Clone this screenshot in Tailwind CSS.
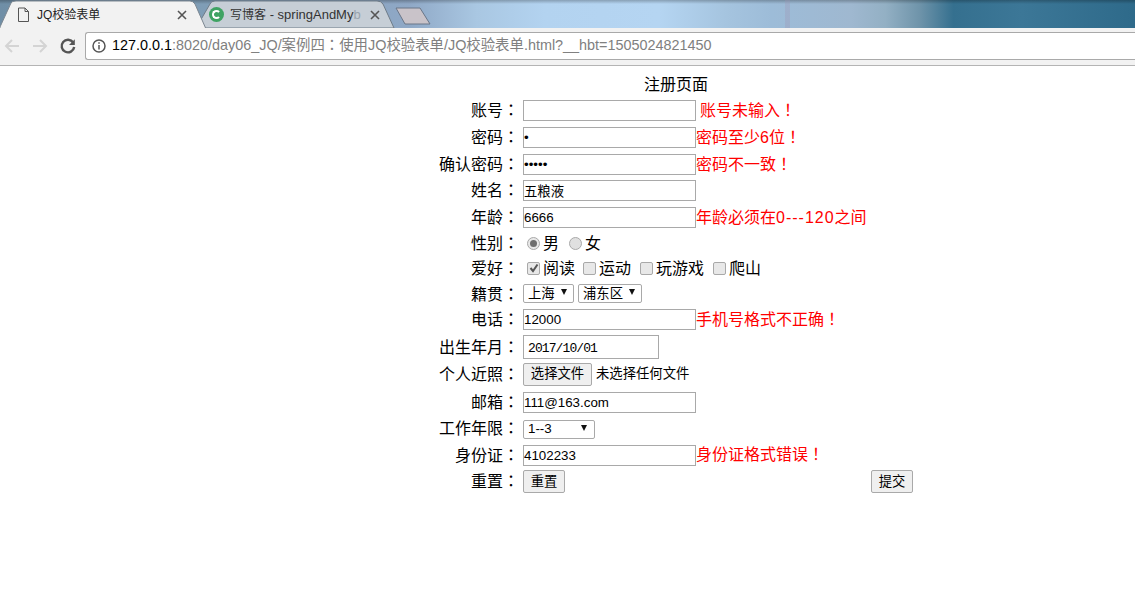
<!DOCTYPE html>
<html lang="zh-CN">
<head>
  <meta charset="UTF-8">
  <script src="https://cdn.jsdelivr.net/npm/@tailwindcss/browser@4"></script>
  <title>JQ校验表单</title>
</head>
<body class="bg-white text-black overflow-hidden font-['Liberation_Sans','Noto_Sans_CJK_SC',sans-serif]">

  <!-- browser chrome -->
  <div class="relative h-[28px] overflow-hidden bg-[linear-gradient(90deg,#6f8ea6_0%,#7f9db6_18%,#8fa8c6_36%,#a9c7e2_42%,#b3d3f0_48%,#b5d5f2_58%,#a5c4df_64%,#9dbcd8_68%,#9fb8d0_75%,#93b0c4_78%,#6f94aa_81%,#35708f_84%,#3c7797_90%,#2e6a8a_100%)]">
    <div class="absolute inset-x-0 top-0 h-[4px] bg-gradient-to-b from-black/25 to-transparent"></div>
    <div class="absolute left-[785px] top-0 w-[5px] h-[28px] bg-[#a096b4]/30"></div>
    <svg class="absolute left-0 top-0" width="440" height="28" viewBox="0 0 440 28">
      <path d="M196 28 L210 4 Q211 1 215 1 L377 1 Q381 1 383 4 L394 28 Z" fill="#c6ced6" stroke="#6f7c88"/>
      <path d="M396 8 L420 8 L430 24 L405 24 Z" fill="#c9c3c9" stroke="#6a7688"/>
      <path d="M0 27 L11 3 Q12 1 16 1 L190 1 Q193 1 195 4 L206 29 L0 29 Z" fill="#f2f2f2" stroke="#7c8791"/>
    </svg>
    <svg class="absolute left-[17px] top-[7px]" width="13" height="16" viewBox="0 0 13 16" fill="none" stroke="#555">
      <path d="M1.5 1 H8 L11.5 4.5 V14.5 H1.5 Z M8 1 V4.5 H11.5"/>
    </svg>
    <span class="absolute left-[37px] top-[6px] text-[12px] leading-[18px] text-[#222]">JQ校验表单</span>
    <svg class="absolute left-[177px] top-[10px]" width="10" height="10" viewBox="0 0 10 10" stroke="#555" stroke-width="1.6">
      <path d="M1 1 L9 9 M9 1 L1 9"/>
    </svg>
    <div class="absolute left-[209px] top-[7px] w-[15px] h-[15px] rounded-full bg-[#3fa363] flex items-center justify-center">
      <div class="w-[9px] h-[9px] rounded-full border-2 border-white border-r-transparent"></div>
    </div>
    <span class="absolute left-[230px] top-[6px] w-[133px] overflow-hidden whitespace-nowrap text-[13px] leading-[18px] text-[#333]"><span class="text-[12px]">写博客</span> - springAndMy<span class="text-[#99a3ad]">b</span></span>
    <svg class="absolute left-[370px] top-[10px]" width="10" height="10" viewBox="0 0 10 10" stroke="#555" stroke-width="1.6">
      <path d="M1 1 L9 9 M9 1 L1 9"/>
    </svg>
  </div>
  <div class="h-[38px] bg-[#f2f2f2] border-b border-[#b4b4b4] flex items-center pb-[1px]">
    <svg class="ml-[3px]" width="18" height="18" viewBox="0 0 18 18" fill="none" stroke="#d4d4d4" stroke-width="2">
      <path d="M16 9 H3 M9 3 L3 9 L9 15"/>
    </svg>
    <svg class="ml-[10px]" width="18" height="18" viewBox="0 0 18 18" fill="none" stroke="#d4d4d4" stroke-width="2">
      <path d="M2 9 H15 M9 3 L15 9 L9 15"/>
    </svg>
    <svg class="ml-[10px]" width="18" height="18" viewBox="0 0 18 18" fill="none" stroke="#555" stroke-width="2.4">
      <path d="M14.2 5.5 A6.3 6.3 0 1 0 15.2 10"/>
      <path d="M15.8 2.2 V8 H10 Z" fill="#555" stroke="none"/>
    </svg>
    <div class="ml-[8px] h-[28px] flex-1 flex items-center bg-white border border-r-0 border-[#a9a9a9] rounded-l-[3px] whitespace-nowrap text-[14.4px]">
      <svg class="ml-[6px]" width="14" height="14" viewBox="0 0 14 14" fill="none" stroke="#555" stroke-width="1.5">
        <circle cx="7" cy="7" r="6"/>
        <path d="M7 6 V10.5 M7 3.2 V4.8"/>
      </svg>
      <span class="ml-[6px] text-black">127.0.0.1</span><span class="text-[#808080]">:8020/day06_JQ/案例四<span lang="zh-TW" class="leading-none font-['Noto_Sans_CJK_TC']">：</span>使用JQ校验表单/JQ校验表单.html?__hbt=1505024821450</span>
    </div>
  </div>

  <!-- form -->
  <div class="ml-[438px] w-[476px] text-[16px]">
    <div class="h-[31px] flex items-center justify-center pt-[6px]">注册页面</div>

    <div class="h-[27px] flex items-center">
      <label class="w-[81px] text-right shrink-0">账号<span lang="zh-TW" class="leading-none font-['Noto_Sans_CJK_TC']">：</span></label>
      <input type="text" class="ml-[4px] w-[173px] h-[21px] border border-[#a9a9a9] px-0 text-[13.33px]">
      <span class="ml-[4px] text-[#ff0000]">账号未输入<span lang="zh-TW" class="leading-none font-['Noto_Sans_CJK_TC']">！</span></span>
    </div>
    <div class="h-[27px] flex items-center">
      <label class="w-[81px] text-right shrink-0">密码<span lang="zh-TW" class="leading-none font-['Noto_Sans_CJK_TC']">：</span></label>
      <input type="password" value="1" class="ml-[4px] w-[173px] h-[21px] border border-[#a9a9a9] px-0 text-[13.33px]">
      <span class="text-[#ff0000]">密码至少6位<span lang="zh-TW" class="leading-none font-['Noto_Sans_CJK_TC']">！</span></span>
    </div>
    <div class="h-[27px] flex items-center">
      <label class="w-[81px] text-right shrink-0">确认密码<span lang="zh-TW" class="leading-none font-['Noto_Sans_CJK_TC']">：</span></label>
      <input type="password" value="12345" class="ml-[4px] w-[173px] h-[21px] border border-[#a9a9a9] px-0 text-[13.33px]">
      <span class="text-[#ff0000]">密码不一致<span lang="zh-TW" class="leading-none font-['Noto_Sans_CJK_TC']">！</span></span>
    </div>
    <div class="h-[25px] flex items-center">
      <label class="w-[81px] text-right shrink-0">姓名<span lang="zh-TW" class="leading-none font-['Noto_Sans_CJK_TC']">：</span></label>
      <input type="text" value="五粮液" class="ml-[4px] w-[173px] h-[21px] border border-[#a9a9a9] px-0 text-[13.33px]">
    </div>
    <div class="h-[29px] flex items-center">
      <label class="w-[81px] text-right shrink-0">年龄<span lang="zh-TW" class="leading-none font-['Noto_Sans_CJK_TC']">：</span></label>
      <input type="text" value="6666" class="ml-[4px] w-[173px] h-[21px] border border-[#a9a9a9] px-0 text-[13.33px]">
      <span class="text-[#ff0000]">年龄必须在<span class="tracking-[1px]">0---120</span>之间</span>
    </div>

    <div class="h-[22px] flex items-center">
      <label class="w-[81px] text-right shrink-0 pt-[2px]">性别<span lang="zh-TW" class="leading-none font-['Noto_Sans_CJK_TC']">：</span></label>
      <span class="ml-[8px] w-[13px] h-[13px] rounded-full border border-[#a9a9a9] bg-[#e8e8e8] flex items-center justify-center">
        <span class="w-[7px] h-[7px] rounded-full bg-[#6e6e6e]"></span>
      </span>
      <span class="ml-[3px] pt-[2px]">男</span>
      <span class="ml-[10px] w-[13px] h-[13px] rounded-full border border-[#a9a9a9] bg-[#e0e0e0]"></span>
      <span class="ml-[3px] pt-[2px]">女</span>
    </div>
    <div class="h-[28px] flex items-center">
      <label class="w-[81px] text-right shrink-0 pt-[2px]">爱好<span lang="zh-TW" class="leading-none font-['Noto_Sans_CJK_TC']">：</span></label>
      <span class="ml-[8px] w-[13px] h-[13px] rounded-[2px] border border-[#a9a9a9] bg-[#e8e8e8] flex items-center justify-center">
        <svg width="10" height="10" viewBox="0 0 10 10" fill="none" stroke="#555" stroke-width="2"><path d="M1.5 5 L4 8 L8.5 1.5"/></svg>
      </span>
      <span class="ml-[3px] pt-[2px]">阅读</span>
      <span class="ml-[8px] w-[13px] h-[13px] rounded-[2px] border border-[#a9a9a9] bg-[#e8e8e8]"></span>
      <span class="ml-[3px] pt-[2px]">运动</span>
      <span class="ml-[9px] w-[13px] h-[13px] rounded-[2px] border border-[#a9a9a9] bg-[#e8e8e8]"></span>
      <span class="ml-[3px] pt-[2px]">玩游戏</span>
      <span class="ml-[9px] w-[13px] h-[13px] rounded-[2px] border border-[#a9a9a9] bg-[#e8e8e8]"></span>
      <span class="ml-[3px] pt-[2px]">爬山</span>
    </div>
    <div class="h-[22px] flex items-center">
      <label class="w-[81px] text-right shrink-0 pt-[4px]">籍贯<span lang="zh-TW" class="leading-none font-['Noto_Sans_CJK_TC']">：</span></label>
      <div class="ml-[4px] w-[51px] h-[19px] border border-[#a9a9a9] rounded-[2px] flex items-center justify-between pl-[4px] pr-[6px] text-[13.33px]">
        <span class="pt-[2px]">上海</span>
        <svg class="mb-[2px]" width="6" height="6" viewBox="0 0 6 6"><path d="M0 0 H6 L3 6 Z" fill="#111"/></svg>
      </div>
      <div class="ml-[4px] w-[64px] h-[19px] border border-[#a9a9a9] rounded-[2px] flex items-center justify-between pl-[4px] pr-[6px] text-[13.33px]">
        <span class="pt-[2px]">浦东区</span>
        <svg class="mb-[2px]" width="6" height="6" viewBox="0 0 6 6"><path d="M0 0 H6 L3 6 Z" fill="#111"/></svg>
      </div>
    </div>
    <div class="h-[31px] flex items-center">
      <label class="w-[81px] text-right shrink-0">电话<span lang="zh-TW" class="leading-none font-['Noto_Sans_CJK_TC']">：</span></label>
      <input type="text" value="12000" class="ml-[4px] w-[173px] h-[21px] border border-[#a9a9a9] px-0 text-[13.33px]">
      <span class="text-[#ff0000]">手机号格式不正确<span lang="zh-TW" class="leading-none font-['Noto_Sans_CJK_TC']">！</span></span>
    </div>
    <div class="h-[24px] flex items-center">
      <label class="w-[81px] text-right shrink-0 pt-[2px]">出生年月<span lang="zh-TW" class="leading-none font-['Noto_Sans_CJK_TC']">：</span></label>
      <div class="ml-[4px] w-[136px] h-[24px] border border-[#a9a9a9] flex items-center pl-[4px] pt-[3px] text-[13px] tracking-[-0.9px] font-['Liberation_Mono',monospace]">2017/10/01</div>
    </div>
    <div class="h-[30px] flex items-center">
      <label class="w-[81px] text-right shrink-0 pt-[2px]">个人近照<span lang="zh-TW" class="leading-none font-['Noto_Sans_CJK_TC']">：</span></label>
      <button class="ml-[4px] w-[69px] h-[23px] border border-[#a9a9a9] rounded-[2px] bg-[#efefef] text-[13.33px]">选择文件</button>
      <span class="ml-[4px] text-[13.33px]">未选择任何文件</span>
    </div>
    <div class="h-[26px] flex items-center">
      <label class="w-[81px] text-right shrink-0 pt-[2px]">邮箱<span lang="zh-TW" class="leading-none font-['Noto_Sans_CJK_TC']">：</span></label>
      <input type="text" value="111@163.com" class="ml-[4px] w-[173px] h-[21px] border border-[#a9a9a9] px-0 text-[13.33px]">
    </div>
    <div class="h-[28px] flex items-center">
      <label class="w-[81px] text-right shrink-0">工作年限<span lang="zh-TW" class="leading-none font-['Noto_Sans_CJK_TC']">：</span></label>
      <div class="ml-[4px] w-[72px] h-[19px] border border-[#a9a9a9] rounded-[2px] flex items-center justify-between pl-[4px] pr-[7px] text-[13.33px]">
        <span>1--3</span>
        <svg class="mb-[2px]" width="6" height="6" viewBox="0 0 6 6"><path d="M0 0 H6 L3 6 Z" fill="#111"/></svg>
      </div>
    </div>
    <div class="h-[24px] flex items-center">
      <label class="w-[81px] text-right shrink-0 pt-[2px]">身份证<span lang="zh-TW" class="leading-none font-['Noto_Sans_CJK_TC']">：</span></label>
      <input type="text" value="4102233" class="ml-[4px] w-[173px] h-[21px] border border-[#a9a9a9] px-0 text-[13.33px]">
      <span class="text-[#ff0000]">身份证格式错误<span lang="zh-TW" class="leading-none font-['Noto_Sans_CJK_TC']">！</span></span>
    </div>
    <div class="h-[29px] flex items-center">
      <label class="w-[81px] text-right shrink-0">重置<span lang="zh-TW" class="leading-none font-['Noto_Sans_CJK_TC']">：</span></label>
      <button class="ml-[4px] w-[42px] h-[23px] border border-[#a9a9a9] rounded-[2px] bg-[#efefef] text-[13.33px]">重置</button>
      <button class="ml-auto mr-[1px] w-[42px] h-[23px] border border-[#a9a9a9] rounded-[2px] bg-[#efefef] text-[13.33px]">提交</button>
    </div>
  </div>
</body>
</html>
